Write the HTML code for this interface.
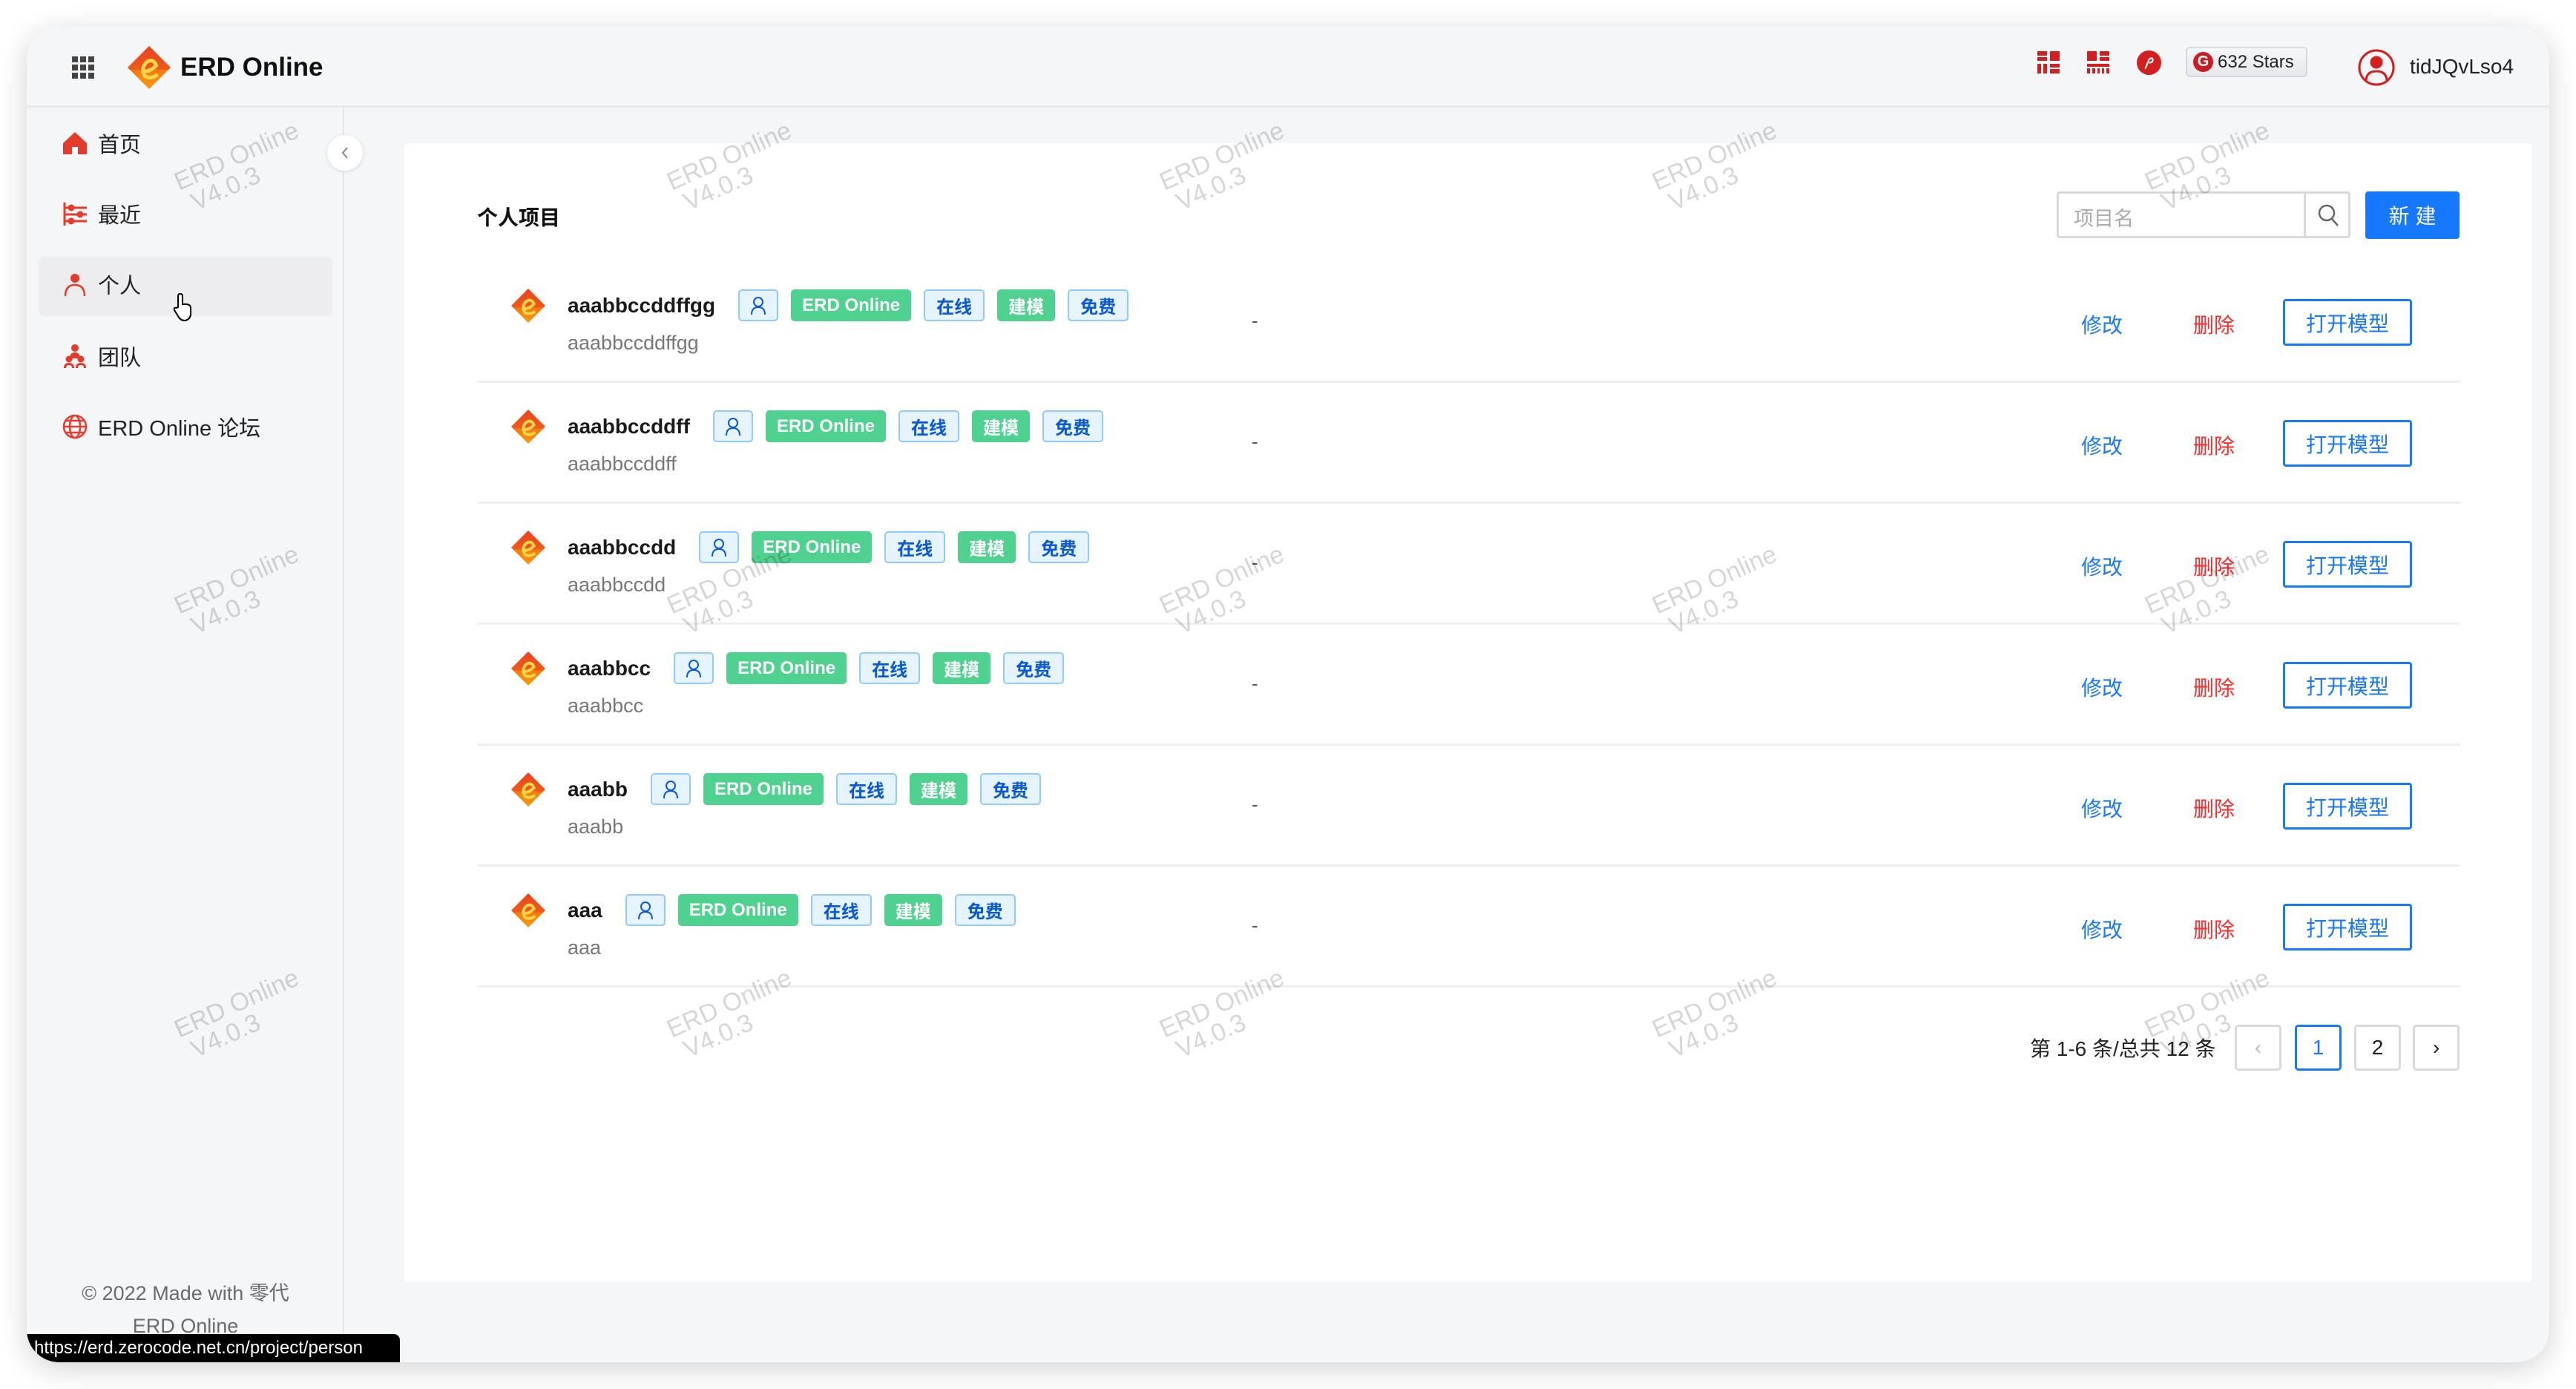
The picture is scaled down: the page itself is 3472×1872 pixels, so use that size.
<!DOCTYPE html>
<html><head><meta charset="utf-8">
<style>
*{box-sizing:border-box;margin:0;padding:0}
html,body{width:3472px;height:1872px;background:#fff;overflow:hidden;font-family:"Liberation Sans","Noto Sans CJK SC",sans-serif;color:#1f1f1f}
.abs{position:absolute}
.win{position:absolute;left:36px;top:36px;width:3400px;height:1800px;background:#f5f6f8;border-radius:44px;box-shadow:0 8px 40px rgba(0,0,0,.18);overflow:hidden}
.hdr{position:absolute;left:0;top:0;width:3400px;height:109px;border-bottom:3px solid #e8e9ec}
.side{position:absolute;left:0;top:109px;width:428px;height:1691px;border-right:2px solid #e4e5e8}
.mi{position:absolute;left:48px;width:400px;font-size:29px;color:#222;display:flex;align-items:center}
.mi svg{margin-right:14px}
.panel{position:absolute;left:509px;top:157px;width:2867px;height:1535px;background:#fff;border-radius:6px}
.wm{position:absolute;color:rgba(0,0,0,.16);font-size:34px;line-height:34px;transform:rotate(-24deg);transform-origin:center;white-space:nowrap;text-align:left}
.row{position:absolute;left:607px;width:2673px;height:163px;border-bottom:3px solid #efefef}
.name{position:absolute;left:122px;top:37px;display:flex;align-items:center;height:43px}
.name b{font-size:28px;font-weight:700;color:#1a1a1a;margin-right:31px}
.tag{height:43px;border-radius:5px;font-size:24px;font-weight:700;display:flex;align-items:center;justify-content:center;margin-right:17px;padding:0 15px}
.tb{background:#e6f4ff;border:2px solid #91caff;color:#0958d9}
.tg{background:#4fd18f;color:#fff}
.lg{position:absolute;left:46px;top:36px}
.sub{position:absolute;left:122px;top:94px;font-size:27px;color:#777}
.dash{position:absolute;left:1044px;top:64px;font-size:26px;color:#555}
.edit{position:absolute;left:2162px;top:64px;font-size:28px;color:#1677ff}
.del{position:absolute;left:2313px;top:64px;font-size:28px;color:#ff2a2a}
.open{position:absolute;left:2434px;top:50px;width:174px;height:63px;border:3px solid #1677ff;border-radius:4px;color:#1677ff;font-size:28px;display:flex;align-items:center;justify-content:center}
.pg{position:absolute;top:1345px;width:63px;height:62px;border:3px solid #d9d9d9;border-radius:5px;display:flex;align-items:center;justify-content:center;font-size:28px;background:#fff}
</style></head><body>
<svg width="0" height="0" style="position:absolute"><defs><linearGradient id="lg" x1="0" y1="0" x2="0" y2="1"><stop offset="0" stop-color="#e8431e"/><stop offset=".55" stop-color="#ef5a1c"/><stop offset=".56" stop-color="#f47a10"/><stop offset="1" stop-color="#fb9a0a"/></linearGradient></defs></svg>
<div class="win">
 <div class="hdr">
  <svg class="abs" style="left:61px;top:40px" width="30" height="30" viewBox="0 0 30 30" fill="#444"><rect x="0" y="0" width="8" height="8"/><rect x="11" y="0" width="8" height="8"/><rect x="22" y="0" width="8" height="8"/><rect x="0" y="11" width="8" height="8"/><rect x="11" y="11" width="8" height="8"/><rect x="22" y="11" width="8" height="8"/><rect x="0" y="22" width="8" height="8"/><rect x="11" y="22" width="8" height="8"/><rect x="22" y="22" width="8" height="8"/></svg>
  <svg class="abs" style="left:136px;top:26px" width="58" height="58" viewBox="0 0 60 60"><polygon points="30,0 60,30 30,60 0,30" fill="url(#lg)"/><path d="M19 34 Q30 38 40 27 Q36 17 27 22 Q18 30 24 42 Q32 47 42 40" fill="none" stroke="#ffd84a" stroke-width="5"/></svg>
  <div class="abs" style="left:207px;top:35px;font-size:35px;font-weight:700;color:#111">ERD Online</div>
  <svg class="abs" style="left:2710px;top:33px" width="30" height="30" viewBox="0 0 30 30" fill="#d41f1f"><rect x="0" y="0" width="13" height="6"/><rect x="0" y="8" width="13" height="5"/><rect x="17" y="0" width="13" height="13"/><rect x="0" y="17" width="5" height="13"/><rect x="8" y="17" width="5" height="13"/><rect x="17" y="17" width="13" height="5"/><rect x="17" y="24" width="13" height="6"/></svg>
  <svg class="abs" style="left:2777px;top:33px" width="30" height="30" viewBox="0 0 30 30" fill="#d41f1f"><rect x="0" y="0" width="13" height="13"/><rect x="17" y="0" width="13" height="6"/><rect x="17" y="8" width="13" height="5"/><rect x="0" y="17" width="30" height="4"/><rect x="0" y="23" width="4" height="7"/><rect x="7" y="23" width="4" height="7"/><rect x="14" y="23" width="3" height="7"/><rect x="20" y="23" width="3" height="7"/><rect x="26" y="23" width="4" height="7"/></svg>
  <svg class="abs" style="left:2844px;top:32px" width="33" height="33" viewBox="0 0 32 32"><circle cx="16" cy="16" r="16" fill="#d41f1f"/><path d="M11 24 L16 12 Q20 8 21 12 Q21 16 16 16" fill="none" stroke="#fff" stroke-width="2"/></svg>
  <div class="abs" style="left:2910px;top:27px;width:164px;height:41px;border:2px solid #d5d9e0;border-radius:5px;background:linear-gradient(#f6f7f9,#e6e8ec);display:flex;align-items:center;padding-left:8px;font-size:24px;color:#222"><span style="width:27px;height:27px;border-radius:50%;background:#c71d23;color:#fff;font-weight:700;font-size:20px;display:inline-flex;align-items:center;justify-content:center;margin-right:6px">G</span>632 Stars</div>
  <svg class="abs" style="left:3142px;top:30px" width="50" height="50" viewBox="0 0 50 50" fill="none" stroke="#d41f1f" stroke-width="3"><circle cx="25" cy="25" r="23"/><circle cx="25" cy="18" r="7" fill="#d41f1f"/><path d="M11 42 Q12 30 25 30 Q38 30 39 42"/></svg>
  <div class="abs" style="left:3212px;top:38px;font-size:28px;color:#222">tidJQvLso4</div>
 </div>
 <div class="side">
  <div class="abs" style="left:16px;top:201px;width:396px;height:80px;background:#ededf0;border-radius:8px"></div>
  <div class="mi" style="top:28px;height:40px"><svg width="34" height="34" viewBox="0 0 34 34"><path d="M17 2 L33 17 V32 H1 V17 Z" fill="#e43b2b"/><rect x="13" y="22" width="8" height="10" fill="#fff"/></svg>首页</div>
  <div class="mi" style="top:123px;height:40px"><svg width="34" height="34" viewBox="0 0 34 34" fill="none" stroke="#e43b2b" stroke-width="3"><path d="M3 2 V33 M3 9 H33 M3 18 H33 M3 27 H33"/><circle cx="12" cy="9" r="3" fill="#e43b2b"/><circle cx="24" cy="18" r="3" fill="#e43b2b"/><circle cx="12" cy="27" r="3" fill="#e43b2b"/></svg>最近</div>
  <div class="mi" style="top:218px;height:40px"><svg width="34" height="34" viewBox="0 0 34 34" fill="none" stroke="#e43b2b" stroke-width="2.5"><circle cx="17" cy="9" r="6" fill="#e43b2b" stroke="none"/><path d="M4 33 Q4 18 17 18 Q30 18 30 33"/></svg>个人</div>
  <div class="mi" style="top:315px;height:40px"><svg width="34" height="34" viewBox="0 0 34 34" fill="#e43b2b"><circle cx="17" cy="6" r="5"/><path d="M10 20 Q10 12 17 12 Q24 12 24 20 Z"/><circle cx="9" cy="21" r="4.5"/><circle cx="25" cy="21" r="4.5"/><path d="M2 33 Q2 26 9 26 Q16 26 16 33 H13 Q13 29 9 29 Q5 29 5 33Z M18 33 Q18 26 25 26 Q32 26 32 33 H29 Q29 29 25 29 Q21 29 21 33Z"/></svg>团队</div>
  <div class="mi" style="top:410px;height:40px"><svg width="34" height="34" viewBox="0 0 34 34" fill="none" stroke="#e43b2b" stroke-width="2.5"><circle cx="17" cy="17" r="15"/><ellipse cx="17" cy="17" rx="7" ry="15"/><path d="M2 17 H32 M5 9 H29 M5 25 H29"/></svg>ERD Online 论坛</div>
  <div class="abs" style="left:0;width:428px;text-align:center;top:1576px;font-size:27px;color:#6b6b6b;line-height:44px">© 2022 Made with 零代<br>ERD Online</div>
 </div>
 <div class="abs" style="left:405px;top:146px;width:48px;height:48px;border-radius:50%;background:#fff;box-shadow:0 1px 6px rgba(0,0,0,.12);display:flex;align-items:center;justify-content:center"><svg width="14" height="18" viewBox="0 0 14 18"><path d="M10 2 L4 9 L10 16" fill="none" stroke="#888" stroke-width="2"/></svg></div>
 <div class="panel"></div>
 <div class="abs" style="left:607px;top:236px;font-size:28px;font-weight:700;color:#111">个人项目</div>
 <div class="abs" style="left:2736px;top:222px;width:396px;height:63px;border:3px solid #d9d9d9;border-radius:4px;background:#fff"><span style="position:absolute;left:20px;top:12px;font-size:27px;color:#aaa">项目名</span><span style="position:absolute;left:330px;top:0;width:3px;height:57px;background:#d9d9d9"></span><svg style="position:absolute;left:348px;top:13px" width="32" height="32" viewBox="0 0 32 32" fill="none" stroke="#666" stroke-width="2.5"><circle cx="13" cy="13" r="10"/><path d="M20 21 L28 30"/></svg></div>
 <div class="abs" style="left:3152px;top:222px;width:127px;height:64px;background:#1677ff;border-radius:4px;color:#fff;font-size:28px;display:flex;align-items:center;justify-content:center;letter-spacing:8px;padding-left:8px">新建</div>

 <div class="row" style="top:317px"><svg class="lg" width="46" height="46" viewBox="0 0 60 60"><polygon points="30,0 60,30 30,60 0,30" fill="url(#lg)"/><path d="M19 34 Q30 38 40 27 Q36 17 27 22 Q18 30 24 42 Q32 47 42 40" fill="none" stroke="#ffd84a" stroke-width="5"/></svg><div class="name"><b>aaabbccddffgg</b><span class="tag tb" style="width:54px;padding:0"><svg width="22" height="26" viewBox="0 0 22 26" fill="none" stroke="#0958d9" stroke-width="2"><circle cx="11" cy="8" r="6"/><path d="M2 25 Q2 15 11 15 Q20 15 20 25"/></svg></span><span class="tag tg">ERD Online</span><span class="tag tb">在线</span><span class="tag tg">建模</span><span class="tag tb">免费</span></div><div class="sub">aaabbccddffgg</div><div class="dash">-</div><div class="edit">修改</div><div class="del">删除</div><div class="open">打开模型</div></div>
 <div class="row" style="top:480px"><svg class="lg" width="46" height="46" viewBox="0 0 60 60"><polygon points="30,0 60,30 30,60 0,30" fill="url(#lg)"/><path d="M19 34 Q30 38 40 27 Q36 17 27 22 Q18 30 24 42 Q32 47 42 40" fill="none" stroke="#ffd84a" stroke-width="5"/></svg><div class="name"><b>aaabbccddff</b><span class="tag tb" style="width:54px;padding:0"><svg width="22" height="26" viewBox="0 0 22 26" fill="none" stroke="#0958d9" stroke-width="2"><circle cx="11" cy="8" r="6"/><path d="M2 25 Q2 15 11 15 Q20 15 20 25"/></svg></span><span class="tag tg">ERD Online</span><span class="tag tb">在线</span><span class="tag tg">建模</span><span class="tag tb">免费</span></div><div class="sub">aaabbccddff</div><div class="dash">-</div><div class="edit">修改</div><div class="del">删除</div><div class="open">打开模型</div></div>
 <div class="row" style="top:643px"><svg class="lg" width="46" height="46" viewBox="0 0 60 60"><polygon points="30,0 60,30 30,60 0,30" fill="url(#lg)"/><path d="M19 34 Q30 38 40 27 Q36 17 27 22 Q18 30 24 42 Q32 47 42 40" fill="none" stroke="#ffd84a" stroke-width="5"/></svg><div class="name"><b>aaabbccdd</b><span class="tag tb" style="width:54px;padding:0"><svg width="22" height="26" viewBox="0 0 22 26" fill="none" stroke="#0958d9" stroke-width="2"><circle cx="11" cy="8" r="6"/><path d="M2 25 Q2 15 11 15 Q20 15 20 25"/></svg></span><span class="tag tg">ERD Online</span><span class="tag tb">在线</span><span class="tag tg">建模</span><span class="tag tb">免费</span></div><div class="sub">aaabbccdd</div><div class="dash">-</div><div class="edit">修改</div><div class="del">删除</div><div class="open">打开模型</div></div>
 <div class="row" style="top:806px"><svg class="lg" width="46" height="46" viewBox="0 0 60 60"><polygon points="30,0 60,30 30,60 0,30" fill="url(#lg)"/><path d="M19 34 Q30 38 40 27 Q36 17 27 22 Q18 30 24 42 Q32 47 42 40" fill="none" stroke="#ffd84a" stroke-width="5"/></svg><div class="name"><b>aaabbcc</b><span class="tag tb" style="width:54px;padding:0"><svg width="22" height="26" viewBox="0 0 22 26" fill="none" stroke="#0958d9" stroke-width="2"><circle cx="11" cy="8" r="6"/><path d="M2 25 Q2 15 11 15 Q20 15 20 25"/></svg></span><span class="tag tg">ERD Online</span><span class="tag tb">在线</span><span class="tag tg">建模</span><span class="tag tb">免费</span></div><div class="sub">aaabbcc</div><div class="dash">-</div><div class="edit">修改</div><div class="del">删除</div><div class="open">打开模型</div></div>
 <div class="row" style="top:969px"><svg class="lg" width="46" height="46" viewBox="0 0 60 60"><polygon points="30,0 60,30 30,60 0,30" fill="url(#lg)"/><path d="M19 34 Q30 38 40 27 Q36 17 27 22 Q18 30 24 42 Q32 47 42 40" fill="none" stroke="#ffd84a" stroke-width="5"/></svg><div class="name"><b>aaabb</b><span class="tag tb" style="width:54px;padding:0"><svg width="22" height="26" viewBox="0 0 22 26" fill="none" stroke="#0958d9" stroke-width="2"><circle cx="11" cy="8" r="6"/><path d="M2 25 Q2 15 11 15 Q20 15 20 25"/></svg></span><span class="tag tg">ERD Online</span><span class="tag tb">在线</span><span class="tag tg">建模</span><span class="tag tb">免费</span></div><div class="sub">aaabb</div><div class="dash">-</div><div class="edit">修改</div><div class="del">删除</div><div class="open">打开模型</div></div>
 <div class="row" style="top:1132px"><svg class="lg" width="46" height="46" viewBox="0 0 60 60"><polygon points="30,0 60,30 30,60 0,30" fill="url(#lg)"/><path d="M19 34 Q30 38 40 27 Q36 17 27 22 Q18 30 24 42 Q32 47 42 40" fill="none" stroke="#ffd84a" stroke-width="5"/></svg><div class="name"><b>aaa</b><span class="tag tb" style="width:54px;padding:0"><svg width="22" height="26" viewBox="0 0 22 26" fill="none" stroke="#0958d9" stroke-width="2"><circle cx="11" cy="8" r="6"/><path d="M2 25 Q2 15 11 15 Q20 15 20 25"/></svg></span><span class="tag tg">ERD Online</span><span class="tag tb">在线</span><span class="tag tg">建模</span><span class="tag tb">免费</span></div><div class="sub">aaa</div><div class="dash">-</div><div class="edit">修改</div><div class="del">删除</div><div class="open">打开模型</div></div>

 <div class="abs" style="left:2700px;top:1356px;font-size:28px;color:#222">第 1-6 条/总共 12 条</div>
 <div class="pg" style="left:2976px;color:#bbb">‹</div>
 <div class="pg" style="left:3057px;border-color:#1677ff;color:#1677ff">1</div>
 <div class="pg" style="left:3137px">2</div>
 <div class="pg" style="left:3216px">›</div>

 <div class="wm" style="left:200px;top:156px">ERD Online<br>&nbsp;V4.0.3</div>
 <div class="wm" style="left:864px;top:156px">ERD Online<br>&nbsp;V4.0.3</div>
 <div class="wm" style="left:1528px;top:156px">ERD Online<br>&nbsp;V4.0.3</div>
 <div class="wm" style="left:2192px;top:156px">ERD Online<br>&nbsp;V4.0.3</div>
 <div class="wm" style="left:2856px;top:156px">ERD Online<br>&nbsp;V4.0.3</div>
 <div class="wm" style="left:200px;top:727px">ERD Online<br>&nbsp;V4.0.3</div>
 <div class="wm" style="left:864px;top:727px">ERD Online<br>&nbsp;V4.0.3</div>
 <div class="wm" style="left:1528px;top:727px">ERD Online<br>&nbsp;V4.0.3</div>
 <div class="wm" style="left:2192px;top:727px">ERD Online<br>&nbsp;V4.0.3</div>
 <div class="wm" style="left:2856px;top:727px">ERD Online<br>&nbsp;V4.0.3</div>
 <div class="wm" style="left:200px;top:1298px">ERD Online<br>&nbsp;V4.0.3</div>
 <div class="wm" style="left:864px;top:1298px">ERD Online<br>&nbsp;V4.0.3</div>
 <div class="wm" style="left:1528px;top:1298px">ERD Online<br>&nbsp;V4.0.3</div>
 <div class="wm" style="left:2192px;top:1298px">ERD Online<br>&nbsp;V4.0.3</div>
 <div class="wm" style="left:2856px;top:1298px">ERD Online<br>&nbsp;V4.0.3</div>

 <svg class="abs" style="left:196px;top:358px" width="30" height="40" viewBox="0 0 30 40"><path d="M8 20 V5 Q8 2 11 2 Q14 2 14 5 V16 Q24 15 25 20 V30 Q24 37 17 38 Q11 38 8 32 L3 24 Q2 20 6 21 Z" fill="#fff" stroke="#000" stroke-width="2"/></svg>
 <div class="abs" style="left:0;top:1762px;width:503px;height:38px;background:#000;border-top-right-radius:8px;color:#fff;font-size:24px;padding-left:10px;line-height:38px">https://erd.zerocode.net.cn/project/person</div>
</div>
</body></html>
